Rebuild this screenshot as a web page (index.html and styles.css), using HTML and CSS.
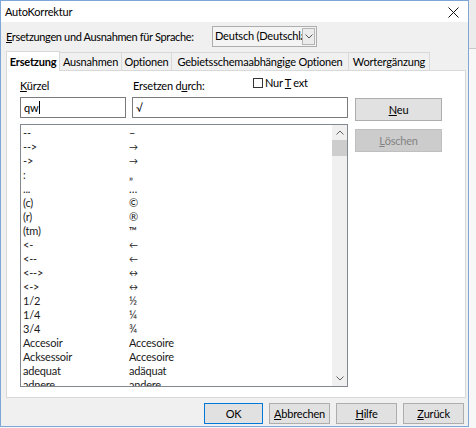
FILE: index.html
```html
<!DOCTYPE html>
<html lang="de">
<head>
<meta charset="utf-8">
<title>AutoKorrektur</title>
<link rel="stylesheet" href="styles.css">
</head>
<body>
<div class="window">
  <div class="titlebar">
    <span class="title">AutoKorrektur</span>
    <svg class="close" width="11" height="11" viewBox="0 0 11 11"><path d="M0.5 0.5 L10.5 10.5 M10.5 0.5 L0.5 10.5" stroke="#111" stroke-width="1" fill="none"/></svg>
  </div>
  <div class="langrow">
    <span class="langlabel"><u>E</u>rsetzungen und Ausnahmen für Sprache:</span>
    <div class="combo">
      <span class="combo-text">Deutsch (Deutschland)</span>
      <span class="combo-btn"><svg width="8" height="5" viewBox="0 0 8 5"><path d="M0.5 0.5 L4 4 L7.5 0.5" stroke="#555" fill="none"/></svg></span>
    </div>
  </div>
  <div class="tabs">
    <div class="tab active t1">Ersetzung</div>
    <div class="tab t2">Ausnahmen</div>
    <div class="tab t3">Optionen</div>
    <div class="tab t4">Gebietsschemaabhängige Optionen</div>
    <div class="tab t5">Wortergänzung</div>
  </div>
  <div class="panel">
    <div class="left">
      <div class="labels">
        <span class="lbl lbl-k"><u>K</u>ürzel</span>
        <span class="lbl lbl-e">Ersetzen d<u>u</u>rch:</span>
        <span class="check"><span class="box"></span>Nur <u>T</u>ext</span>
      </div>
      <div class="inputs">
        <div class="input in-k">qw<span class="caret"></span></div>
        <div class="input in-e">√</div>
      </div>
      <div class="list">
        <div class="rows">
          <div class="row"><span class="c1">--</span><span class="c2">–</span></div>
          <div class="row"><span class="c1">--&gt;</span><span class="c2 ar">→</span></div>
          <div class="row"><span class="c1">-&gt;</span><span class="c2 ar">→</span></div>
          <div class="row"><span class="c1">:</span><span class="c2">„</span></div>
          <div class="row"><span class="c1">...</span><span class="c2">…</span></div>
          <div class="row"><span class="c1">(c)</span><span class="c2">©</span></div>
          <div class="row"><span class="c1">(r)</span><span class="c2">®</span></div>
          <div class="row"><span class="c1">(tm)</span><span class="c2">™</span></div>
          <div class="row"><span class="c1">&lt;-</span><span class="c2 ar">←</span></div>
          <div class="row"><span class="c1">&lt;--</span><span class="c2 ar">←</span></div>
          <div class="row"><span class="c1">&lt;--&gt;</span><span class="c2 ar">↔</span></div>
          <div class="row"><span class="c1">&lt;-&gt;</span><span class="c2 ar">↔</span></div>
          <div class="row"><span class="c1">1/2</span><span class="c2">½</span></div>
          <div class="row"><span class="c1">1/4</span><span class="c2">¼</span></div>
          <div class="row"><span class="c1">3/4</span><span class="c2">¾</span></div>
          <div class="row"><span class="c1">Accesoir</span><span class="c2">Accesoire</span></div>
          <div class="row"><span class="c1">Acksessoir</span><span class="c2">Accesoire</span></div>
          <div class="row"><span class="c1">adequat</span><span class="c2">adäquat</span></div>
          <div class="row"><span class="c1">adnere</span><span class="c2">andere</span></div>
        </div>
        <div class="scrollbar">
          <div class="sb-arrow"><svg width="8" height="5" viewBox="0 0 8 5"><path d="M0.5 4.5 L4 1 L7.5 4.5" stroke="#606060" fill="none"/></svg></div>
          <div class="sb-thumb"></div>
          <div class="sb-track"></div>
          <div class="sb-arrow"><svg width="8" height="5" viewBox="0 0 8 5"><path d="M0.5 0.5 L4 4 L7.5 0.5" stroke="#606060" fill="none"/></svg></div>
        </div>
      </div>
    </div>
    <div class="side">
      <div class="btn"><u>N</u>eu</div>
      <div class="btn disabled"><u>L</u>öschen</div>
    </div>
  </div>
  <div class="footer">
    <div class="btn fbtn ok">OK</div>
    <div class="btn fbtn"><u>A</u>bbrechen</div>
    <div class="btn fbtn"><u>H</u>ilfe</div>
    <div class="btn fbtn"><u>Z</u>urück</div>
  </div>
</div>
</body>
</html>
```
FILE: styles.css
```css
* { box-sizing: border-box; }
html, body { margin: 0; padding: 0; }
body {
  width: 476px;
  height: 428px;
  overflow: hidden;
  font-family: Lato, "Noto Sans", sans-serif;
  font-size: 11px;
  letter-spacing: -0.2px;
  color: #000;
  white-space: nowrap;
  background: linear-gradient(to bottom, #ececec 0, #ececec 48px, #c9c9c9 48px, #c9c9c9 49px, #f7f7f7 49px);
}
u { text-underline-offset: 1px; }
.window {
  width: 469px;
  height: 427px;
  border: 1px solid #7ea7d8;
  background: #f0f0f0;
  display: flex;
  flex-direction: column;
}
.titlebar {
  height: 21px;
  background: #fff;
  display: flex;
  align-items: center;
  justify-content: space-between;
  padding: 1px 9px 0 4px;
}
.title { line-height: 16px; }
.close { display: block; }

.langrow {
  height: 28px;
  display: flex;
  align-items: center;
  padding-left: 5px;
}
.langlabel { width: 206px; flex: none; letter-spacing: -0.35px; }
.combo {
  width: 105px;
  height: 21px;
  border: 1px solid #adadad;
  background: #f4f4f4;
  display: flex;
  align-items: center;
  overflow: hidden;
}
.combo-text {
  flex: 1;
  overflow: hidden;
  padding-left: 2px;
  line-height: 16px;
}
.combo-btn {
  flex: none;
  width: 13px;
  height: 17px;
  margin-right: 1px;
  border: 1px solid #b4b4b4;
  background: #ececec;
  display: flex;
  align-items: center;
  justify-content: center;
}
.combo-btn svg { display: block; }

.tabs {
  display: flex;
  align-items: flex-end;
  height: 20px;
  margin-left: 5px;
  margin-right: 2px;
  position: relative;
  z-index: 1;
}
.tab {
  height: 18px;
  border: 1px solid #d9d9d9;
  border-bottom: none;
  border-left: none;
  background: #f0f0f0;
  display: flex;
  align-items: center;
  justify-content: center;
  line-height: 16px;
}
.tab.active {
  height: 20px;
  background: #fff;
  font-weight: bold;
  border-left: 1px solid #d9d9d9;
  margin-bottom: -1px;
}
.t1 { width: 54px; }
.t2 { width: 62px; }
.t3 { width: 50px; }
.t4 { width: 177px; }
.t5 { width: 81px; }

.panel {
  height: 328px;
  margin-left: 5px;
  margin-right: 2px;
  border: 1px solid #d9d9d9;
  background: #fff;
  display: flex;
  padding: 6px 0 0 13px;
}
.left { width: 328px; flex: none; }
.labels {
  height: 20px;
  display: flex;
  padding-top: 1px;
  line-height: 16px;
}
.lbl-k { width: 113px; padding-left: 0; }
.lbl-e { width: 120px; }
.check {
  display: flex;
  align-items: center;
  height: 12px;
  margin-top: -1px;
  gap: 2px;
}
.box {
  width: 10px;
  height: 10px;
  border: 1px solid #333;
  background: #fff;
  display: inline-block;
}
.inputs {
  display: flex;
  gap: 6px;
}
.input {
  height: 21px;
  border: 1px solid #7a7a7a;
  background: #fff;
  display: flex;
  align-items: center;
  padding-left: 3px;
  line-height: 16px;
}
.in-k { width: 106px; }
.in-e { width: 216px; }
.caret {
  display: inline-block;
  width: 1px;
  height: 13px;
  background: #000;
  margin-left: 1px;
}
.list {
  margin-top: 6px;
  width: 328px;
  height: 263px;
  border: 1px solid #828790;
  display: flex;
  overflow: hidden;
}
.rows {
  flex: 1;
  padding: 1px 0 0 2px;
  overflow: hidden;
  color: #1a1a1a;
}
.row {
  display: flex;
  height: 14px;
  line-height: 14px;
}
.c1 { width: 106px; flex: none; }
.ar { font-size: 9px; }
.scrollbar {
  width: 15px;
  flex: none;
  background: #f0f0f0;
  display: flex;
  flex-direction: column;
}
.sb-arrow {
  height: 15px;
  display: flex;
  align-items: center;
  justify-content: center;
}
.sb-arrow svg { display: block; }
.sb-thumb {
  height: 16px;
  background: #cdcdcd;
}
.sb-track { flex: 1; }

.side {
  padding-top: 21px;
  padding-left: 7px;
  display: flex;
  flex-direction: column;
  gap: 8px;
}
.btn {
  width: 87px;
  height: 23px;
  border: 1px solid #adadad;
  background: #e1e1e1;
  display: flex;
  align-items: center;
  justify-content: center;
  line-height: 16px;
}
.btn.disabled {
  background: #cccccc;
  border-color: #bfbfbf;
  color: #838383;
}
.footer {
  display: flex;
  justify-content: flex-end;
  gap: 6px;
  padding: 5px 4px 0 0;
}
.fbtn { width: 61px; height: 21px; }
.fbtn.ok { width: 59px; border-color: #0078d7; }
```
